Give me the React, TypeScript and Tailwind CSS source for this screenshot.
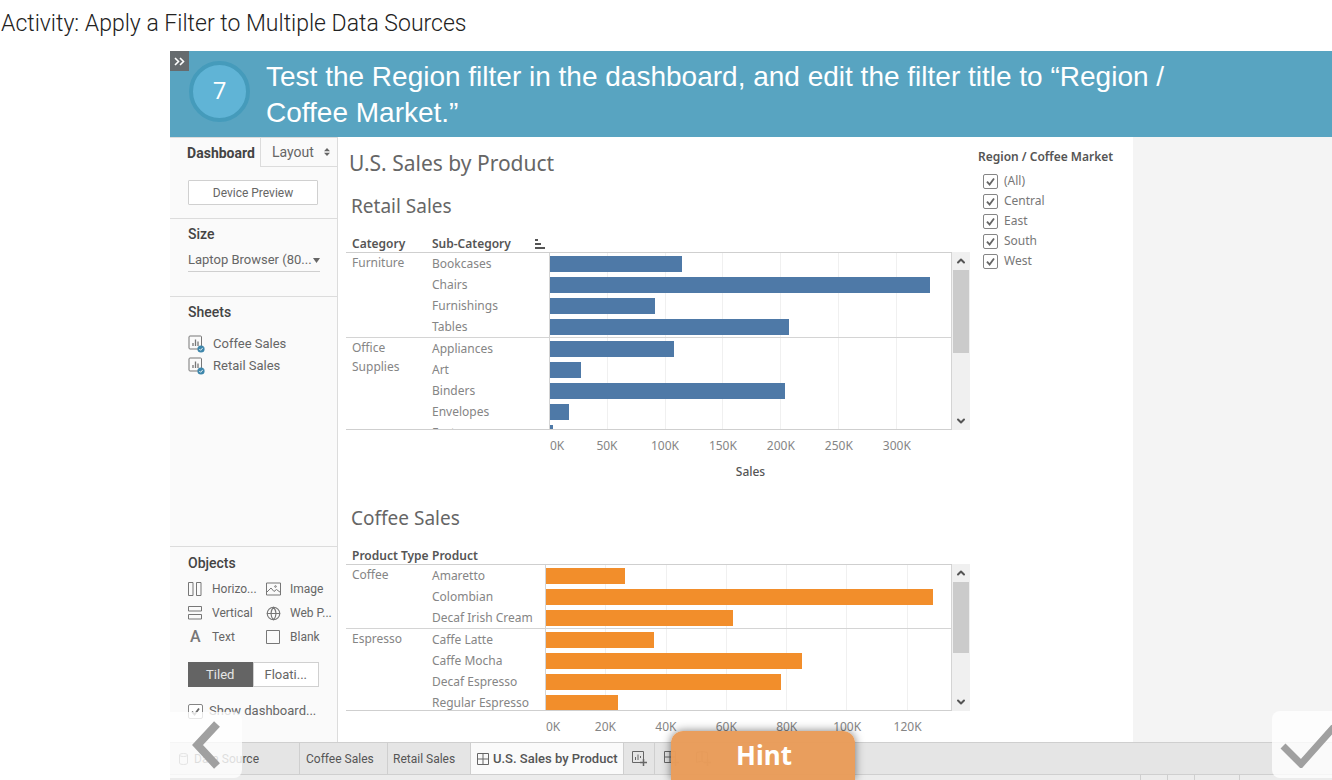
import { Fragment } from 'react';
import type { ReactNode } from 'react';
import { ChevronDown, ChevronUp, Globe } from 'lucide-react';

interface Row {
  label: string;
  value: number;
}

interface Group {
  name: string;
  rows: Row[];
}

interface Tick {
  label: string;
  value: number;
}

interface BarTableProps {
  title: string;
  groupHeader: string;
  rowHeader: string;
  groups: Group[];
  ticks: Tick[];
  max: number;
  axisTitle?: string;
  sortIcon?: boolean;
  // Class names that differ between the two sheets
  heightClass: string;
  labelColClass: string;
  axisInsetClass: string;
  barClass: string;
  thumbClass: string;
}

// Values in thousands
const retailGroups: Group[] = [
  {
    name: 'Furniture',
    rows: [
      { label: 'Bookcases', value: 114.3 },
      { label: 'Chairs', value: 328.2 },
      { label: 'Furnishings', value: 91 },
      { label: 'Tables', value: 206.6 },
    ],
  },
  {
    name: 'Office Supplies',
    rows: [
      { label: 'Appliances', value: 107.4 },
      { label: 'Art', value: 27 },
      { label: 'Binders', value: 203 },
      { label: 'Envelopes', value: 16 },
      { label: 'Fasteners', value: 3 },
    ],
  },
];

const coffeeGroups: Group[] = [
  {
    name: 'Coffee',
    rows: [
      { label: 'Amaretto', value: 26.2 },
      { label: 'Colombian', value: 128.3 },
      { label: 'Decaf Irish Cream', value: 62.2 },
    ],
  },
  {
    name: 'Espresso',
    rows: [
      { label: 'Caffe Latte', value: 35.8 },
      { label: 'Caffe Mocha', value: 84.9 },
      { label: 'Decaf Espresso', value: 77.9 },
      { label: 'Regular Espresso', value: 24 },
    ],
  },
];

const retailTicks: Tick[] = [0, 50, 100, 150, 200, 250, 300].map((v) => ({ label: `${v}K`, value: v }));
const coffeeTicks: Tick[] = [0, 20, 40, 60, 80, 100, 120].map((v) => ({ label: `${v}K`, value: v }));

const regions = ['(All)', 'Central', 'East', 'South', 'West'];

function Checkbox({ label, labelClass }: { label: string; labelClass: string }) {
  return (
    <label className="flex h-5 items-center gap-1.5">
      <span className="relative flex size-[15px] shrink-0">
        <input
          type="checkbox"
          defaultChecked
          className="peer size-[15px] appearance-none rounded-[2px] border border-[#858585] bg-white"
        />
        <svg
          viewBox="0 0 15 15"
          className="pointer-events-none absolute inset-0 hidden size-[15px] peer-checked:block"
          fill="none"
          stroke="#666"
          strokeWidth="1.8"
        >
          <path d="M4 7.6l2.6 3L11 4.4" />
        </svg>
      </span>
      <span className={labelClass}>{label}</span>
    </label>
  );
}

function Scrollbar({ thumbClass }: { thumbClass: string }) {
  return (
    <div className="mt-4 flex w-[18px] flex-col items-center bg-[#f0f0f0]">
      <ChevronUp className="h-[18px] w-3 shrink-0 text-[#555]" strokeWidth={4} />
      <div className={`w-4 bg-[#cbcbcb] ${thumbClass}`} />
      <ChevronDown className="mt-auto h-[18px] w-3 shrink-0 text-[#555]" strokeWidth={4} />
    </div>
  );
}

function BarTable({
  title,
  groupHeader,
  rowHeader,
  groups,
  ticks,
  max,
  axisTitle,
  sortIcon,
  heightClass,
  labelColClass,
  axisInsetClass,
  barClass,
  thumbClass,
}: BarTableProps) {
  const pct = (value: number) => `${(value / max) * 100}%`;

  return (
    <section>
      <h2 className="pl-[13px] text-[19px] leading-6 text-[#666]">{title}</h2>
      <div className="mt-[18px] flex pl-2">
        <div className={`relative min-w-0 flex-1 overflow-hidden border-b border-[#cfcfcf] ${heightClass}`}>
          {/* Grid lines sit under the table */}
          <div className={`absolute top-4 right-0 bottom-0 border-r border-[#d4d4d4] ${axisInsetClass}`}>
            {ticks.slice(1).map((t) => (
              <div key={t.value} className="absolute inset-y-0 w-px bg-[#f0f0f0]" style={{ left: pct(t.value) }} />
            ))}
          </div>
          <table className="relative w-full table-fixed border-separate border-spacing-0 text-left text-xs text-[#858585]">
            <colgroup>
              <col className="w-20" />
              <col className={labelColClass} />
              <col />
            </colgroup>
            <thead className="text-[#555]">
              <tr>
                <th className="h-[17px] border-b border-[#cfcfcf] p-0 pl-1.5 leading-4 font-semibold whitespace-nowrap">
                  {groupHeader}
                </th>
                <th className="h-[17px] border-b border-[#cfcfcf] p-0 pl-1.5 leading-4 font-semibold whitespace-nowrap">
                  <span className="flex items-center justify-between pr-[3px]">
                    {rowHeader}
                    {sortIcon && (
                      <svg width="11" height="12" viewBox="0 0 11 12" fill="#555">
                        <path d="M0 1h3v2H0zM0 5h6v2H0zM0 9h10v2H0z" />
                      </svg>
                    )}
                  </span>
                </th>
                <th className="h-[17px] border-b border-[#cfcfcf] p-0" aria-label="Sales" />
              </tr>
            </thead>
            <tbody>
              {groups.map((group, g) => (
                <Fragment key={group.name}>
                  {group.rows.map((row, i) => {
                    const last = i === group.rows.length - 1 && g < groups.length - 1;
                    const line = last ? 'h-[22px] border-b border-[#d4d4d4]' : 'h-[21px]';
                    return (
                      <tr key={row.label}>
                        {i === 0 && (
                          <td
                            rowSpan={group.rows.length}
                            className={`p-0 pr-5 pl-1.5 align-top leading-[19px] ${g < groups.length - 1 ? 'border-b border-[#d4d4d4]' : ''}`}
                          >
                            {group.name}
                          </td>
                        )}
                        <td className={`p-0 pl-1.5 leading-5 whitespace-nowrap ${line}`}>{row.label}</td>
                        <td className={`border-l border-l-[#d4d4d4] p-0 ${line}`}>
                          <div className={`h-4 ${barClass}`} style={{ width: pct(row.value) }} />
                        </td>
                      </tr>
                    );
                  })}
                </Fragment>
              ))}
            </tbody>
          </table>
        </div>
        <Scrollbar thumbClass={thumbClass} />
      </div>
      <div className="mr-[18px] pl-2">
        <div className="relative mt-2 h-4 text-xs leading-4 text-[#858585]">
          <div className={`absolute inset-y-0 right-0 ${axisInsetClass}`}>
            {ticks.map((t) => (
              <span
                key={t.value}
                className={t.value === 0 ? 'absolute left-px' : 'absolute -translate-x-1/2'}
                style={t.value === 0 ? undefined : { left: pct(t.value) }}
              >
                {t.label}
              </span>
            ))}
          </div>
        </div>
        {axisTitle && (
          <div className="mt-[10px] pl-[203px] text-center text-xs leading-4 font-medium text-[#555]">{axisTitle}</div>
        )}
      </div>
    </section>
  );
}

function SheetIcon() {
  return (
    <svg width="17" height="18" viewBox="0 0 17 18" fill="none">
      <rect x="1" y="1" width="12.5" height="13" rx="1" stroke="#777" />
      <path d="M5 11V8M7.5 11V4.5M10 11V6.5" stroke="#777" strokeWidth="1.3" />
      <circle cx="13" cy="14" r="3.6" fill="#3d86ab" />
      <path d="M11.3 14l1.3 1.3 2.2-2.5" stroke="#fff" strokeWidth="0.9" />
    </svg>
  );
}

function ObjectItem({ icon, label }: { icon: ReactNode; label: string }) {
  return (
    <li className="flex h-6 items-center">
      <span className="flex w-6 shrink-0 items-center text-[#777]">{icon}</span>
      {label}
    </li>
  );
}

function Sidebar() {
  return (
    <aside className="flex w-[168px] shrink-0 flex-col border-r border-[#dcdcdc] bg-[#fafafa] font-[Roboto,sans-serif] text-[13px] text-[#666]">
      <div className="flex h-[30px] border-t border-[#dcdcdc]" role="tablist">
        <button role="tab" aria-selected="true" className="w-[90px] text-center text-sm font-bold text-[#444]">
          <span className="pl-3">Dashboard</span>
        </button>
        <button
          role="tab"
          aria-selected="false"
          className="flex flex-1 items-center justify-between border-b border-l border-[#dcdcdc] pr-[7px] pl-[11px] text-sm"
        >
          Layout
          <svg width="6" height="8" viewBox="0 0 6 8" fill="#666">
            <path d="M3 0l3 3.3H0zM3 8l3-3.3H0z" />
          </svg>
        </button>
      </div>

      <div className="border-b border-[#dcdcdc] pt-[13px] pr-[19px] pb-[13px] pl-[18px]">
        <button className="h-[25px] w-full rounded-[1px] border border-[#d0d0d0] bg-white text-xs">Device Preview</button>
      </div>

      <div className="h-[78px] border-b border-[#dcdcdc] pt-[5px] pr-[17px] pl-[18px]">
        <label htmlFor="size" className="block text-sm leading-5 font-medium text-[#444]">
          Size
        </label>
        <div className="relative mt-1">
          <select id="size" className="h-6 w-full appearance-none border-b border-[#cfcfcf] bg-transparent text-[13px]">
            <option>Laptop Browser (80...</option>
          </select>
          <svg className="pointer-events-none absolute top-[10px] right-0" width="7" height="5" viewBox="0 0 7 5" fill="#666">
            <path d="M0 0h7L3.5 5z" />
          </svg>
        </div>
      </div>

      <div className="pt-[5px] pl-[18px]">
        <h3 className="text-sm leading-5 font-medium text-[#444]">Sheets</h3>
        <ul className="mt-[11px] text-[13px]">
          {['Coffee Sales', 'Retail Sales'].map((name) => (
            <li key={name} className="flex h-[22px] items-center gap-2">
              <SheetIcon />
              {name}
            </li>
          ))}
        </ul>
      </div>

      <div className="mt-auto h-[196px] border-t border-[#dcdcdc] pt-[6px] pl-[18px]">
        <h3 className="text-sm leading-5 font-medium text-[#444]">Objects</h3>
        <ul className="mt-1 grid grid-cols-[78px_1fr] text-xs whitespace-nowrap">
          <ObjectItem
            label="Horizo..."
            icon={
              <svg width="14" height="14" viewBox="0 0 14 14" fill="none" stroke="currentColor">
                <path d="M.5 .5h4.500v13H.5zM8.500.5H13v13H8.500z" />
              </svg>
            }
          />
          <ObjectItem
            label="Image"
            icon={
              <svg width="15" height="14" viewBox="0 0 15 14" fill="none" stroke="currentColor">
                <path d="M.5 1h14v12H.5zM1 10l4-4 3 3.500 2.500-2 4 3" />
                <circle cx="9.500" cy="4.500" r=".8" />
              </svg>
            }
          />
          <ObjectItem
            label="Vertical"
            icon={
              <svg width="14" height="14" viewBox="0 0 14 14" fill="none" stroke="currentColor">
                <path d="M.5.5h13V5H.5zM.5 8.500h13V13H.5z" />
              </svg>
            }
          />
          <ObjectItem label="Web P..." icon={<Globe className="size-[15px]" strokeWidth={1.8} />} />
          <ObjectItem label="Text" icon={<span className="pl-0.5 text-base font-medium">A</span>} />
          <ObjectItem
            label="Blank"
            icon={
              <svg width="14" height="14" viewBox="0 0 14 14" fill="none" stroke="currentColor">
                <path d="M.5.5h13v13H.5z" />
              </svg>
            }
          />
        </ul>
        <div className="mt-[13px] flex w-[131px]">
          <button className="h-[25px] flex-1 bg-[#646464] text-[13px] text-[#e6e6e6]">Tiled</button>
          <button className="h-[25px] flex-1 border border-[#d0d0d0] bg-white text-[13px]">Floati...</button>
        </div>
        <div className="mt-[14px]">
          <Checkbox label="Show dashboard..." labelClass="text-[13px] whitespace-nowrap" />
        </div>
      </div>
    </aside>
  );
}

function GridIcon() {
  return (
    <svg width="12" height="12" viewBox="0 0 12 12" fill="none" stroke="#666">
      <path d="M.5.5h11v11H.5zM6 .5v11M.5 6h11" />
    </svg>
  );
}

function SheetTabs() {
  return (
    <nav className="flex h-8 shrink-0 border-t border-[#cfcfcf] bg-[#e5e5e5] font-[Roboto,sans-serif] text-xs whitespace-nowrap text-[#555]">
      <button className="flex w-[130px] items-center gap-[6px] border-r border-[#cfcfcf] pl-[9px]">
        <svg width="9" height="12" viewBox="0 0 9 12" fill="none" stroke="#777">
          <path d="M.5 2v8c0 2 8 2 8 0V2M.5 2c0-2 8-2 8 0s-8 2-8 0z" />
        </svg>
        Data Source
      </button>
      <button className="w-[88px] border-r border-[#cfcfcf] pl-1.5 text-left">Coffee Sales</button>
      <button className="w-[83px] border-r border-[#cfcfcf] pl-[5px] text-left">Retail Sales</button>
      <button className="flex w-[152px] items-center gap-1 bg-[#fafafa] pl-[6px] text-[13px] font-medium">
        <GridIcon />
        U.S. Sales by Product
      </button>
      <button className="flex w-8 items-center justify-center border-x border-[#cfcfcf]" aria-label="New worksheet">
        <svg width="17" height="17" viewBox="0 0 17 17" fill="none" stroke="#666">
          <path d="M9 12.500H1.500v-11h11V9M4.500 10V7M7 10V4.500M9.500 8V6" />
          <path d="M12.500 9v7M9 12.500h7" strokeWidth="1.500" />
        </svg>
      </button>
      <button className="flex w-8 items-center justify-center" aria-label="New dashboard">
        <svg width="17" height="17" viewBox="0 0 17 17" fill="none" stroke="#666">
          <path d="M9 12.500H1.500v-11h11V9M7 1.500v11M1.500 7h11" />
          <path d="M12.500 9v7M9 12.500h7" strokeWidth="1.500" />
        </svg>
      </button>
      <button className="flex w-8 items-center justify-center" aria-label="New story">
        <svg width="17" height="17" viewBox="0 0 17 17" fill="none" stroke="#666">
          <path d="M9 12.500L7 11l-5.500 1.500v-10L7 1.500l5.500 1V9M7 1.500V11" />
          <path d="M12.500 9v7M9 12.500h7" strokeWidth="1.500" />
        </svg>
      </button>
    </nav>
  );
}

export default function App() {
  return (
    <div className="flex min-h-screen flex-col overflow-hidden bg-white">
      <h1 className="h-[51px] pt-2.5 pl-px font-[Roboto,sans-serif] text-[23px] leading-7 font-light text-[#222]">
        Activity: Apply a Filter to Multiple Data Sources
      </h1>

      <main className="relative ml-[170px] flex flex-1 flex-col">
        <header className="flex min-h-[86px] bg-[#58a4c1] text-white">
          <button className="flex h-5 w-[19px] shrink-0 items-center justify-center bg-[#666b6e]" aria-label="Collapse">
            <svg width="11" height="9" viewBox="0 0 11 9" fill="none" stroke="#fff" strokeWidth="1.600">
              <path d="M1 1l3.500 3.500L1 8M6 1l3.500 3.500L6 8" />
            </svg>
          </button>
          <div className="mt-[10px] flex size-[61px] shrink-0 items-center justify-center rounded-full border-4 border-[#459bbb] bg-[#60b4d6] pb-1 font-['Open_Sans',sans-serif] text-2xl">
            7
          </div>
          <p className="max-w-[930px] pt-2 pl-4 font-['Liberation_Sans',Arial,sans-serif] text-[28px] leading-9">
            Test the Region filter in the dashboard, and edit the filter title to “Region / Coffee Market.”
          </p>
        </header>

        <div className="flex flex-1">
          <Sidebar />
          <div className="flex-1 bg-[#f4f4f4]">
            <div className="flex h-full max-w-[795px] bg-white font-['Noto_Sans',sans-serif]">
              <div className="min-w-0 flex-1">
                <h2 className="pt-3 pb-[17px] pl-[11px] text-[21px] leading-7 text-[#666]">U.S. Sales by Product</h2>
                <BarTable
                  title="Retail Sales"
                  groupHeader="Category"
                  rowHeader="Sub-Category"
                  groups={retailGroups}
                  ticks={retailTicks}
                  max={347.6}
                  axisTitle="Sales"
                  sortIcon
                  heightClass="h-[194px]"
                  labelColClass="w-[123px]"
                  axisInsetClass="left-[203px]"
                  barClass="bg-[#4e79a7]"
                  thumbClass="h-[83px]"
                />
                <div className="h-[26px]" />
                <BarTable
                  title="Coffee Sales"
                  groupHeader="Product Type"
                  rowHeader="Product"
                  groups={coffeeGroups}
                  ticks={coffeeTicks}
                  max={134.7}
                  heightClass="h-[163px]"
                  labelColClass="w-[119px]"
                  axisInsetClass="left-[199px]"
                  barClass="bg-[#f28e2b]"
                  thumbClass="h-[71px]"
                />
              </div>
              <fieldset className="w-[163px] shrink-0 pt-3 pl-2 text-[#777]">
                <legend className="float-left w-full text-xs leading-4 font-semibold text-[#555]">
                  Region / Coffee Market
                </legend>
                <div className="clear-both pt-[6px] pl-[5px]">
                  {regions.map((region) => (
                    <Checkbox key={region} label={region} labelClass="text-xs" />
                  ))}
                </div>
              </fieldset>
            </div>
          </div>
        </div>

        <SheetTabs />
        <div className="flex h-1.5 justify-end border-t border-[#cfcfcf] bg-[#ececec] pr-[92px]">
          <div className="w-[27px] border-l border-[#cfcfcf]" />
          <div className="w-[27px] border-l border-[#cfcfcf]" />
          <div className="w-[46px] border-x border-[#cfcfcf]" />
        </div>

        {/* Player controls float over the slide */}
        <button
          className="absolute bottom-0.5 left-0 flex h-[66px] w-[72px] items-center justify-center rounded-r-lg bg-white/80"
          aria-label="Previous"
        >
          <svg width="28" height="48" viewBox="0 0 28 48" fill="none" stroke="#a0a0a0" strokeWidth="8">
            <path d="M25 3L5.500 24 25 45" />
          </svg>
        </button>
        <button className="absolute bottom-0 left-[501px] h-[49px] w-[184px] rounded-t-xl bg-[#e99c5a]/98 pl-0.5 font-['Noto_Sans',sans-serif] text-[26px] font-bold text-white shadow-[0_0_10px_rgba(0,0,0,0.5)]">
          Hint
        </button>
        <button
          className="absolute right-0 bottom-0.5 flex h-[67px] w-[60px] items-center justify-end rounded-l-lg bg-white/80"
          aria-label="Done"
        >
          <svg width="52" height="46" viewBox="0 0 52 46" fill="none" stroke="#a0a0a0" strokeWidth="7">
            <path d="M3 24l18 18L54 5" />
          </svg>
        </button>
      </main>
    </div>
  );
}
